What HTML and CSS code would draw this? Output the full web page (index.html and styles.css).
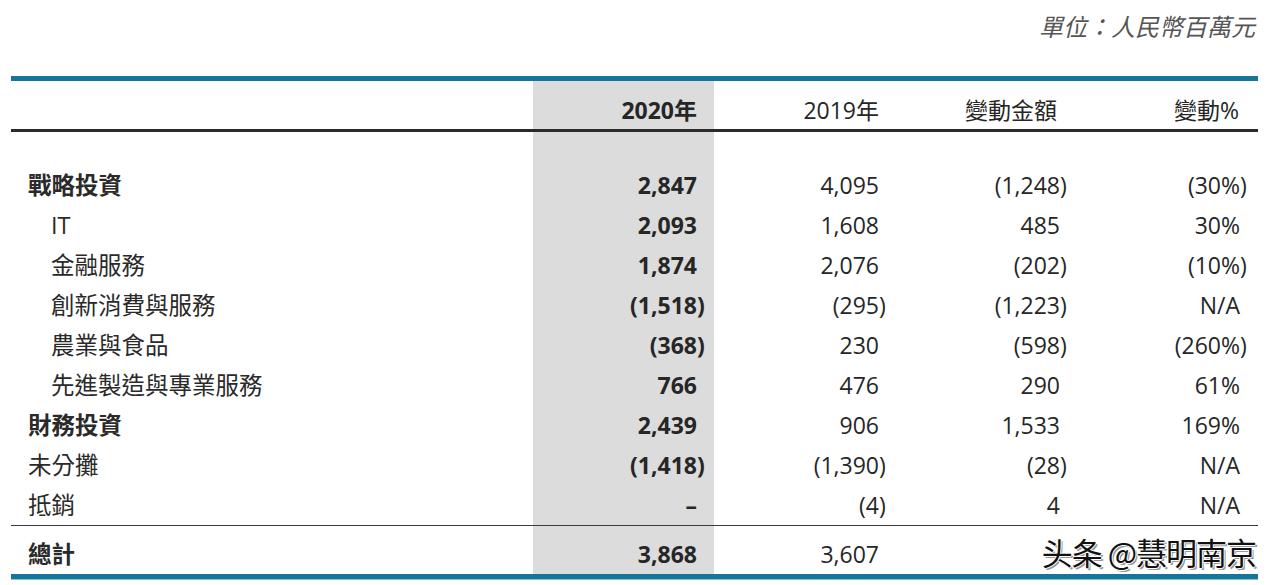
FILE: index.html
```html
<!DOCTYPE html>
<html lang="zh-Hant">
<head>
<meta charset="utf-8">
<link rel="stylesheet" href="styles.css">
</head>
<body>
<div class="page">
  <div class="unit">單位：人民幣百萬元</div>
  <div class="wrap">
    <table class="fin">
      <colgroup>
        <col class="c-label"><col class="c-num"><col class="c-num"><col class="c-num"><col class="c-num">
      </colgroup>
      <thead>
        <tr class="head">
          <th></th>
          <th class="cur">2020年</th>
          <th>2019年</th>
          <th>變動金額</th>
          <th>變動%</th>
        </tr>
      </thead>
      <tbody>
        <tr class="spacer"><td></td><td class="cur"></td><td></td><td></td><td></td></tr>
        <tr class="cat"><td class="lab">戰略投資</td><td class="cur">2,847</td><td>4,095</td><td>(1,248<span class="cp">)</span></td><td>(30%<span class="cp">)</span></td></tr>
        <tr><td class="lab sub">IT</td><td class="cur">2,093</td><td>1,608</td><td>485</td><td>30%</td></tr>
        <tr><td class="lab sub">金融服務</td><td class="cur">1,874</td><td>2,076</td><td>(202<span class="cp">)</span></td><td>(10%<span class="cp">)</span></td></tr>
        <tr><td class="lab sub">創新消費與服務</td><td class="cur">(1,518<span class="cp">)</span></td><td>(295<span class="cp">)</span></td><td>(1,223<span class="cp">)</span></td><td>N/A</td></tr>
        <tr><td class="lab sub">農業與食品</td><td class="cur">(368<span class="cp">)</span></td><td>230</td><td>(598<span class="cp">)</span></td><td>(260%<span class="cp">)</span></td></tr>
        <tr><td class="lab sub">先進製造與專業服務</td><td class="cur">766</td><td>476</td><td>290</td><td>61%</td></tr>
        <tr class="cat"><td class="lab">財務投資</td><td class="cur">2,439</td><td>906</td><td>1,533</td><td>169%</td></tr>
        <tr><td class="lab">未分攤</td><td class="cur">(1,418<span class="cp">)</span></td><td>(1,390<span class="cp">)</span></td><td>(28<span class="cp">)</span></td><td>N/A</td></tr>
        <tr><td class="lab">抵銷</td><td class="cur">–</td><td>(4<span class="cp">)</span></td><td>4</td><td>N/A</td></tr>
        <tr class="total cat"><td class="lab">總計</td><td class="cur">3,868</td><td>3,607</td><td></td><td></td></tr>
      </tbody>
    </table>
    <div class="watermark">头条 @慧明南京</div>
  </div>
</div>
</body>
</html>
```

FILE: styles.css
```css
html, body {
  margin: 0;
  padding: 0;
  background: #ffffff;
}

.page {
  width: 1274px;
  height: 585px;
  overflow: hidden;
  font-family: "Open Sans", "Noto Sans CJK TC", sans-serif;
  color: #262626;
}

.unit {
  text-align: right;
  padding: 11px 19px 0 0;
  height: 76px;
  box-sizing: border-box;
  font-size: 24px;
  line-height: 30px;
  font-style: italic;
  color: #555555;
  font-family: "Noto Sans CJK TC", sans-serif;
}

.wrap {
  position: relative;
  margin-left: 11px;
  width: 1247px;
}

.fin {
  width: 1247px;
  border-collapse: collapse;
  table-layout: fixed;
  border-top: 5px solid #17749a;
  border-bottom: 5px solid #17749a;
  box-shadow: 0 1px 0 #7cc6dd;
}

.c-label { width: 522px; }
.c-num:nth-child(2) { width: 181px; }
.c-num:nth-child(3) { width: 182px; }
.c-num:nth-child(4) { width: 180px; }
.c-num:nth-child(5) { width: 182px; }

.fin th,
.fin td {
  padding: 0 17px 0 0;
  text-align: right;
  font-size: 23px;
  white-space: nowrap;
}

.fin th {
  font-weight: 400;
  font-size: 23px;
  height: 52px;
  vertical-align: bottom;
  padding-bottom: 4px;
  line-height: 30px;
  box-sizing: border-box;
  border-bottom: 3px solid #2b2b2b;
}

.fin th:nth-child(4) { padding-right: 19px; }
.fin th:nth-child(5) { padding-right: 19px; }

.fin td {
  height: 40px;
  line-height: 40px;
  vertical-align: middle;
}

.fin td:nth-child(4) { padding-right: 16px; }
.fin td:nth-child(5) { padding-right: 18px; }

.spacer td {
  height: 33px;
  line-height: 33px;
}

.fin .cur {
  background: #dcdcdd;
  font-weight: 700;
}

.fin td.lab {
  text-align: left;
  padding-left: 17px;
  font-size: 23.5px;
  color: #2a2a2a;
}

.fin td.lab.sub { padding-left: 40px; }

.cat .lab { font-weight: 700; }

.total td {
  border-top: 1px solid #3a3a3a;
  height: 46px;
  line-height: 40px;
  padding-top: 8px;
  box-sizing: border-box;
}

.cp {
  display: inline-block;
  width: 0;
}

.watermark {
  position: absolute;
  right: 2px;
  bottom: 7px;
  background: #ffffff;
  padding: 0 0 0 10px;
  font-family: "Noto Sans CJK SC", sans-serif;
  font-size: 31px;
  line-height: 40px;
  color: #111111;
  letter-spacing: -1px;
  text-shadow: 1px 0 0 #fff, -1px 0 0 #fff, 0 1px 0 #fff, 0 -1px 0 #fff, 2px 2px 0 #999;
}
```
